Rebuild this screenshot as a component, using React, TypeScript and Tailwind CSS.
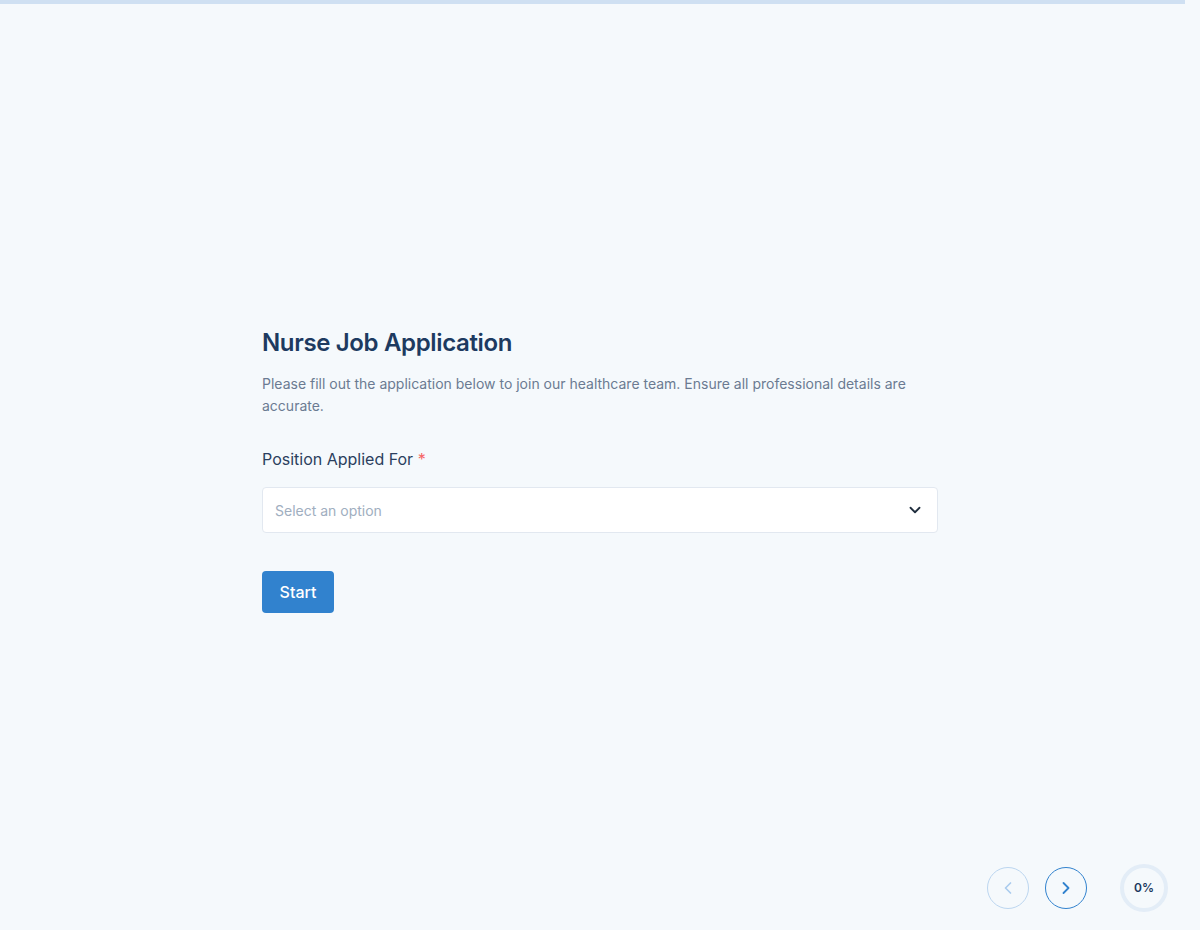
import React from 'react';

const App = () => {
    return (
        <div className="relative h-[930px] w-full bg-[#f5f9fc] font-['Inter',sans-serif] overflow-hidden">
            <div className="h-[4px] w-[1185px] bg-[#cfe0f2]"></div>

            <div className="flex h-[926px] justify-center pt-[320px]">
                <div className="w-[676px]">
                    <h1 className="text-[24px] leading-[38px] font-semibold text-[#1d3a60] tracking-[-0.35px]">Nurse Job Application</h1>
                    <p className="mt-[11px] text-[14px] leading-[22px] text-[#6b7b92]">
                        Please fill out the application below to join our healthcare team. Ensure all professional details are accurate.
                    </p>

                    <label className="mt-[30px] block text-[16px] leading-[24px] text-[#2b3f5e]">
                        Position Applied For <span className="text-[#f56565]">*</span>
                    </label>
                    <div className="mt-[16px] flex h-[46px] items-center justify-between rounded-[4px] border border-[#e2e8f0] bg-white pl-[12px] pr-[13px]">
                        <span className="text-[14px] text-[#a0aec0]">Select an option</span>
                        <svg width="18" height="18" viewBox="0 0 24 24" fill="none" stroke="#1f2d3d" strokeWidth="2.4" strokeLinecap="round" strokeLinejoin="round">
                            <path d="M6 9l6 6 6-6" />
                        </svg>
                    </div>

                    <button className="mt-[38px] h-[42px] w-[72px] rounded-[4px] bg-[#3182ce] text-[16px] font-medium text-white">Start</button>
                </div>
            </div>

            {/* nav + progress */}
            <div className="absolute bottom-[18px] right-[32px] flex items-center">
                <button className="flex h-[42px] w-[42px] items-center justify-center rounded-full border border-[#bcd6f0]">
                    <svg width="20" height="20" viewBox="0 0 24 24" fill="none" stroke="#a9cbee" strokeWidth="2" strokeLinecap="round" strokeLinejoin="round">
                        <path d="M15 6l-6 6 6 6" />
                    </svg>
                </button>
                <button className="ml-[16px] flex h-[42px] w-[42px] items-center justify-center rounded-full border border-[#3182ce]">
                    <svg width="20" height="20" viewBox="0 0 24 24" fill="none" stroke="#3182ce" strokeWidth="2.2" strokeLinecap="round" strokeLinejoin="round">
                        <path d="M9 6l6 6-6 6" />
                    </svg>
                </button>
                <div className="ml-[33px] flex h-[48px] w-[48px] items-center justify-center rounded-full border-[4px] border-[#e3edf7]">
                    <span className="text-[12px] font-semibold text-[#1d3a60]">0%</span>
                </div>
            </div>
        </div>
    );
};

export default App;
